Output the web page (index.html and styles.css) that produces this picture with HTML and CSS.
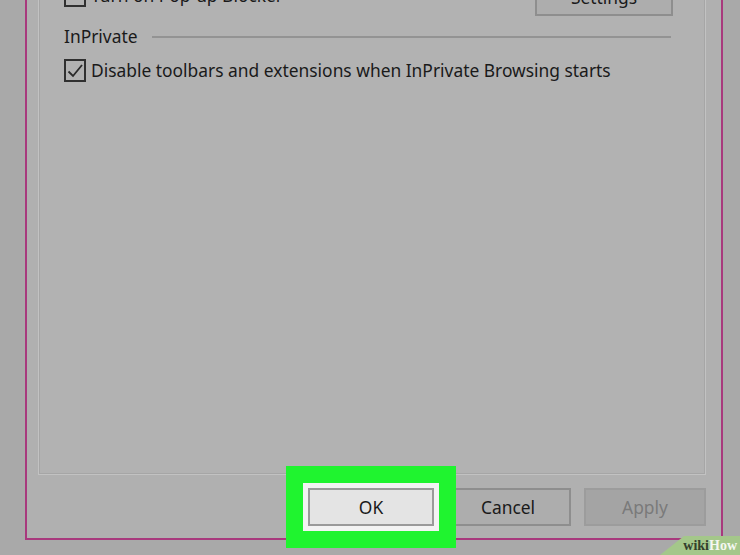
FILE: index.html
```html
<!DOCTYPE html>
<html lang="en">
<head>
    <meta charset="UTF-8">
    <title>Internet Options - Privacy</title>
    <link rel="stylesheet" href="styles.css">
</head>
<body>
    <div class="dialog">
        <div class="panel">
            <div class="row-top">
                <label class="check-label top-check">
                    <span class="box"></span>
                    <span>Turn on Pop-up Blocker</span>
                </label>
                <button class="btn settings">Settings</button>
            </div>
            <div class="group-head">
                <span>InPrivate</span>
                <span class="rule"></span>
            </div>
            <label class="check-label">
                <span class="box">
                    <svg width="18" height="18" viewBox="0 0 18 18"><path d="M2.5 9.5 L7 14 L16 3" fill="none" stroke="#2a2a2a" stroke-width="1.8"/></svg>
                </span>
                <span>Disable toolbars and extensions when InPrivate Browsing starts</span>
            </label>
        </div>
        <div class="actions">
            <button class="btn ok">OK</button>
            <button class="btn cancel">Cancel</button>
            <button class="btn apply">Apply</button>
        </div>
    </div>
    <div class="badge"><span class="wiki">wiki</span><span class="how">How</span></div>
</body>
</html>
```

FILE: styles.css
```css
/* Dialog dimmed by the screenshot */
html, body {
    height: 100%;
}
body {
    margin: 0;
    background: #a9a9a9;
    font-family: "Noto Sans", "Liberation Sans", sans-serif;
    font-size: 17.4px;
    color: #1a1a1a;
    overflow: hidden;
}
.dialog {
    margin: -40px 0 0 25px;
    width: 668px;
    border: 2px solid #a8397d;
    border-top: none;
    padding: 6px 15px 12px 11px;
    background: #b0b0b0;
    box-sizing: content-box;
}
.panel {
    height: 509px;
    box-sizing: border-box;
    border: 1px solid #c2c2c2;
    box-shadow: inset 0 0 0 1px #a6a6a6;
    background: #b2b2b2;
    padding: 11px 32px 0 25px;
}
.row-top {
    display: flex;
    justify-content: space-between;
    height: 38px;
}
.top-check {
    margin-top: -3px;
}
.check-label {
    display: flex;
    align-items: center;
    gap: 5px;
    line-height: 23px;
}
.box {
    width: 22px;
    height: 23px;
    box-sizing: border-box;
    border: 2px solid #303030;
    display: flex;
    align-items: center;
    justify-content: center;
}
.group-head {
    display: flex;
    align-items: center;
    margin-top: 10px;
    height: 20px;
}
.rule {
    flex: 1;
    height: 2px;
    background: #939393;
    margin: 2px 2px 0 14px;
}
.group-head + .check-label {
    margin-top: 13px;
}
.btn {
    font-family: inherit;
    font-size: 17.4px;
    height: 38px;
    box-sizing: border-box;
    border: 2px solid #8e8e8e;
    background: #adadad;
    color: #1a1a1a;
    padding: 0;
}
.settings {
    width: 138px;
}
.actions {
    display: flex;
    justify-content: flex-end;
    margin-top: 13px;
}
.ok {
    width: 126px;
    background: #e4e4e4;
    border-color: #9a9a9a;
    margin-right: 11px;
    position: relative;
    z-index: 1;
    box-shadow: 0 0 0 5px #f3f3f3, 0 0 0 22px #1ff42f;
}
.cancel {
    width: 126px;
    margin-right: 13px;
}
.apply {
    width: 122px;
    background: #a4a4a4;
    border-color: #9c9c9c;
    color: #7a7a7a;
}
.badge {
    position: absolute;
    right: 0;
    bottom: 0;
    width: 80px;
    height: 19px;
    background: #a4c78a;
    clip-path: polygon(24px 0, 100% 0, 100% 100%, 0 100%);
    font-family: "Liberation Serif", serif;
    font-weight: bold;
    font-size: 14px;
    line-height: 19px;
    text-align: right;
    padding-right: 3px;
    box-sizing: border-box;
}
.wiki {
    color: #33402c;
}
.how {
    color: #f4f7f1;
}
```
